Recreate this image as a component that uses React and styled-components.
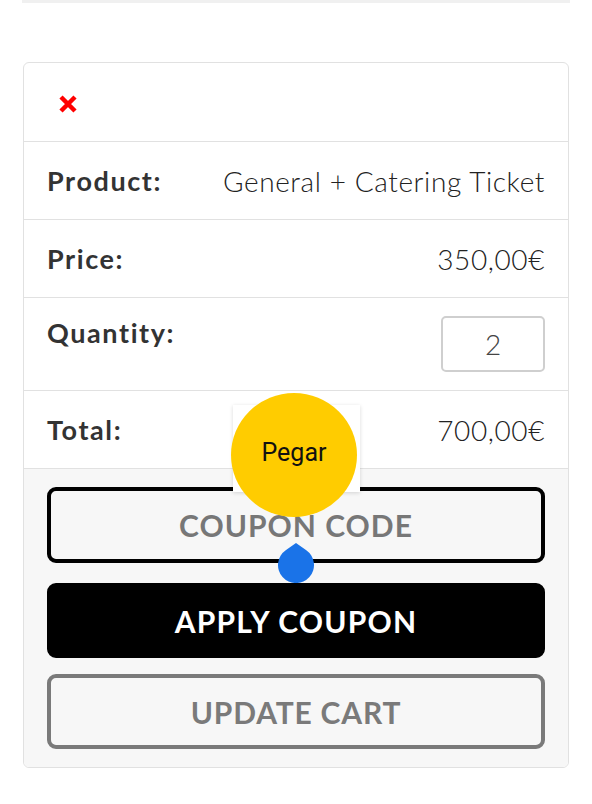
import React from 'react';
import styled, { createGlobalStyle } from 'styled-components';

const rows = [
    { label: 'Product:', value: 'General + Catering Ticket' },
    { label: 'Price:', value: '350,00€' },
];

const App = () => (
    <>
        <GlobalStyle />
        <Page>
            <TopBar />
            <Card>
                <RemoveRow>
                    <RemoveIcon viewBox='0 0 20 20'>
                        <path d='M3 3 L17 17 M17 3 L3 17' />
                    </RemoveIcon>
                </RemoveRow>
                {rows.map((row) => (
                    <Row key={row.label}>
                        <Label>{row.label}</Label>
                        <Value>{row.value}</Value>
                    </Row>
                ))}
                <Row tall>
                    <Label>Quantity:</Label>
                    <QuantityInput defaultValue='2' />
                </Row>
                <Row>
                    <Label>Total:</Label>
                    <Value>700,00€</Value>
                </Row>
                <Actions>
                    <CouponInput placeholder='COUPON CODE' />
                    <Button primary>APPLY COUPON</Button>
                    <Button>UPDATE CART</Button>
                </Actions>

                <PastePopup>
                    <PasteBubble>Pegar</PasteBubble>
                </PastePopup>
                <CaretHandle viewBox='0 0 36 40'>
                    <path d='M18 0 L28.3 7.3 A18 18 0 1 1 7.7 7.3 Z' />
                </CaretHandle>
            </Card>
        </Page>
    </>
);

export default App;

// *** STYLES ***

const GlobalStyle = createGlobalStyle`
    body {
        margin: 0;
        background: #fff;
        font-family: Lato, 'Open Sans', sans-serif;
    }
`;

const Page = styled.div`
    width: 592px;
    padding: 0 23px;
    box-sizing: border-box;
`;

const TopBar = styled.div`
    height: 3px;
    margin: 0 -1px;
    background: #f0f0f0;
`;

const Card = styled.div`
    position: relative;
    margin-top: 59px;
    border: 1px solid #e1e1e1;
    border-radius: 6px;
`;

const RemoveRow = styled.div`
    height: 78px;
    display: flex;
    align-items: center;
    padding-left: 34px;
    border-bottom: 1px solid #e1e1e1;
`;

const RemoveIcon = styled.svg`
    width: 20px;
    height: 20px;
    margin-top: 4px;
    path {
        stroke: #ff0000;
        stroke-width: 4.5;
        fill: none;
    }
`;

const Row = styled.div`
    height: ${(p) => (p.tall ? '93px' : '78px')};
    display: flex;
    align-items: ${(p) => (p.tall ? 'flex-start' : 'center')};
    justify-content: space-between;
    padding: ${(p) => (p.tall ? '18px 23px 0 23px' : '0 23px')};
    box-sizing: border-box;
    border-bottom: 1px solid #e1e1e1;
`;

const Label = styled.span`
    font-size: 27px;
    font-weight: 700;
    color: #333;
    letter-spacing: 1.6px;
`;

const Value = styled.span`
    font-size: 28px;
    font-weight: 300;
    color: #222;
    letter-spacing: 0.6px;
    font-variant-numeric: tabular-nums;
`;

const QuantityInput = styled.input`
    width: 104px;
    height: 56px;
    box-sizing: border-box;
    border: 2px solid #cfcfcf;
    border-radius: 5px;
    text-align: center;
    font-family: inherit;
    font-size: 28px;
    font-weight: 300;
    color: #444;
    background: #fff;
    outline: none;
`;

const Actions = styled.div`
    display: flex;
    flex-direction: column;
    padding: 18px 23px 18px;
    background: #f7f7f7;
    border-radius: 0 0 6px 6px;
`;

const CouponInput = styled.input`
    height: 76px;
    box-sizing: border-box;
    border: 4px solid #000;
    border-radius: 9px;
    background: #f7f7f7;
    text-align: center;
    font-family: inherit;
    font-size: 30px;
    font-weight: 700;
    outline: none;
    &::placeholder {
        color: #777;
        letter-spacing: 1px;
    }
`;

const Button = styled.button`
    height: 75px;
    margin-top: ${(p) => (p.primary ? '20px' : '16px')};
    box-sizing: border-box;
    border: 4px solid ${(p) => (p.primary ? '#000' : '#7a7a7a')};
    border-radius: 9px;
    background: ${(p) => (p.primary ? '#000' : '#f7f7f7')};
    color: ${(p) => (p.primary ? '#fff' : '#7a7a7a')};
    font-family: inherit;
    font-size: 30px;
    font-weight: 700;
    letter-spacing: ${(p) => (p.primary ? '1.2px' : '0.8px')};
`;

const PastePopup = styled.div`
    position: absolute;
    left: 209px;
    top: 342px;
    width: 127px;
    height: 87px;
    background: #fff;
    box-shadow: 0 1px 4px rgba(0, 0, 0, 0.15);
`;

const PasteBubble = styled.div`
    position: absolute;
    left: -2px;
    top: -12px;
    width: 126px;
    height: 124px;
    border-radius: 50%;
    background: #ffcc00;
    display: flex;
    align-items: center;
    justify-content: center;
    font-family: Roboto, sans-serif;
    font-size: 25px;
    color: #111;
    padding-bottom: 6px;
    box-sizing: border-box;
`;

const CaretHandle = styled.svg`
    position: absolute;
    left: 254px;
    top: 480px;
    width: 36px;
    height: 40px;
    path {
        fill: #1a73e8;
    }
`;
